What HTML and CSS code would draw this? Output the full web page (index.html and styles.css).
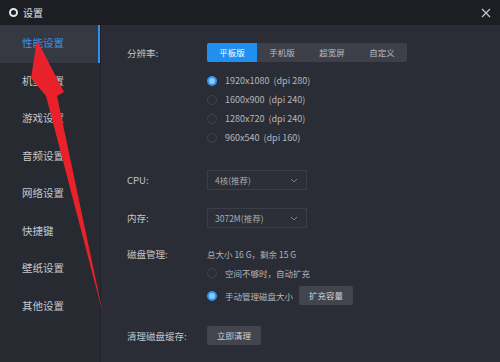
FILE: index.html
```html
<!DOCTYPE html>
<html lang="zh-CN">
<head>
    <meta charset="UTF-8">
    <title>设置</title>
    <link rel="stylesheet" href="styles.css">
</head>
<body>
<div class="window">
    <div class="titlebar">
        <span class="logo"></span>
        <span class="title">设置</span>
        <svg class="close" width="10" height="10" viewBox="0 0 10 10">
            <path d="M1 1 L9 9 M9 1 L1 9" stroke="#c4c6cb" stroke-width="1.2" fill="none"/>
        </svg>
    </div>
    <div class="body">
        <nav class="sidebar">
            <div class="nav-item active">性能设置</div>
            <div class="nav-item">机型设置</div>
            <div class="nav-item">游戏设置</div>
            <div class="nav-item">音频设置</div>
            <div class="nav-item">网络设置</div>
            <div class="nav-item">快捷键</div>
            <div class="nav-item">壁纸设置</div>
            <div class="nav-item">其他设置</div>
        </nav>
        <main class="main">
            <div class="row row-res">
                <span class="label">分辨率:</span>
                <div class="tabs">
                    <span class="tab on">平板版</span>
                    <span class="tab">手机版</span>
                    <span class="tab">超宽屏</span>
                    <span class="tab">自定义</span>
                </div>
            </div>
            <div class="radios">
                <div class="radio-row"><span class="radio checked"></span>1920x1080&nbsp;&nbsp;(dpi 280)</div>
                <div class="radio-row"><span class="radio"></span>1600x900&nbsp;&nbsp;(dpi 240)</div>
                <div class="radio-row"><span class="radio"></span>1280x720&nbsp;&nbsp;(dpi 240)</div>
                <div class="radio-row"><span class="radio"></span>960x540&nbsp;&nbsp;(dpi 160)</div>
            </div>
            <div class="row row-cpu">
                <span class="label">CPU:</span>
                <div class="select">4核(推荐)
                    <svg class="chev" width="8" height="5" viewBox="0 0 8 5"><path d="M1 1 L4 4 L7 1" stroke="#80838a" fill="none"/></svg>
                </div>
            </div>
            <div class="row row-mem">
                <span class="label">内存:</span>
                <div class="select">3072M(推荐)
                    <svg class="chev" width="8" height="5" viewBox="0 0 8 5"><path d="M1 1 L4 4 L7 1" stroke="#80838a" fill="none"/></svg>
                </div>
            </div>
            <div class="row row-disk">
                <span class="label">磁盘管理:</span>
                <span class="info">总大小 16 G，剩余 15 G</span>
            </div>
            <div class="row row-auto">
                <span class="label"></span>
                <div class="radio-row"><span class="radio"></span>空间不够时，自动扩充</div>
            </div>
            <div class="row row-manual">
                <span class="label"></span>
                <div class="radio-row"><span class="radio checked"></span>手动管理磁盘大小</div>
                <span class="btn">扩充容量</span>
            </div>
            <div class="row row-clear">
                <span class="label">清理磁盘缓存:</span>
                <span class="btn">立即清理</span>
            </div>
        </main>
    </div>
    <!-- red annotation arrow drawn over the screenshot -->
    <svg class="arrow" width="500" height="362" viewBox="0 0 500 362">
        <polygon points="37,40 64,92 57,96 103,314 46,96 31,78" fill="#e9212b"/>
    </svg>
</div>
</body>
</html>
```
FILE: styles.css
```css
* {
    box-sizing: border-box;
}
body {
    margin: 0;
    font-family: "Noto Sans CJK SC", "Noto Sans", sans-serif;
    background: #2a2d35;
}
.window {
    position: relative;
    width: 500px;
    height: 362px;
    overflow: hidden;
    display: flex;
    flex-direction: column;
}
.titlebar {
    height: 25px;
    background: #1c1e23;
    display: flex;
    align-items: center;
    padding-left: 9px;
    flex-shrink: 0;
}
.logo {
    width: 9px;
    height: 9px;
    border: 2px solid #e8e8ea;
    border-radius: 50%;
}
.title {
    margin-left: 5px;
    font-size: 10px;
    color: #e0e1e4;
}
.close {
    margin-left: auto;
    margin-right: 9px;
}
.body {
    flex: 1;
    display: flex;
}
.sidebar {
    width: 101px;
    background: #272a31;
    border-right: 1px solid #202227;
}
.nav-item {
    height: 37.5px;
    line-height: 36px;
    padding-left: 22px;
    font-size: 10.5px;
    color: #c6c8cc;
}
.nav-item.active {
    background: #363942;
    color: #3a94e8;
    border-right: 2px solid #2f8ef0;
}
.main {
    flex: 1;
    padding: 18px 0 0 26px;
    font-size: 9.5px;
    color: #c4c6ca;
}
.row {
    display: flex;
    align-items: center;
}
.label {
    width: 80px;
    flex-shrink: 0;
}
.tabs {
    display: flex;
    background: #3d4049;
    border-radius: 2px;
}
.tab {
    width: 50px;
    height: 19px;
    line-height: 19px;
    text-align: center;
    font-size: 8.5px;
    color: #b8bbc0;
}
.tab.on {
    background: #1f8ff0;
    color: #fff;
    border-radius: 2px 0 0 2px;
}
.radios {
    margin: 9px 0 0 80px;
}
.radio-row {
    display: flex;
    align-items: center;
    height: 19px;
    font-size: 9px;
    color: #b4b7bc;
}
.radio {
    width: 10px;
    height: 10px;
    border-radius: 50%;
    border: 1px solid #41444c;
    margin: 0 8px 0 0;
}
.radio.checked {
    border: 2.5px solid #2d93f5;
    background: #8ec8ff;
}
.row-cpu {
    margin-top: 23px;
}
.row-mem {
    margin-top: 18px;
}
.select {
    position: relative;
    width: 100px;
    height: 20px;
    line-height: 18px;
    padding-left: 7px;
    border: 1px solid #3b3e46;
    background: #2c2f37;
    font-size: 8.5px;
    color: #a9acb2;
}
.chev {
    position: absolute;
    right: 8px;
    top: 7px;
}
.row-disk {
    margin-top: 18px;
    height: 16px;
}
.info {
    font-size: 8.5px;
    color: #b0b3b8;
}
.row-auto {
    margin-top: 2px;
}
.row-auto .radio-row,
.row-manual .radio-row {
    height: 18px;
    font-size: 8.5px;
}
.row-manual {
    margin-top: 4px;
}
.btn {
    height: 19px;
    line-height: 19px;
    padding: 0 10px;
    background: #42454e;
    border-radius: 2px;
    font-size: 8.5px;
    color: #d0d2d6;
}
.row-manual .btn {
    margin-left: 6px;
}
.row-clear {
    margin-top: 21px;
}
.arrow {
    position: absolute;
    left: 0;
    top: 0;
    pointer-events: none;
}
```
